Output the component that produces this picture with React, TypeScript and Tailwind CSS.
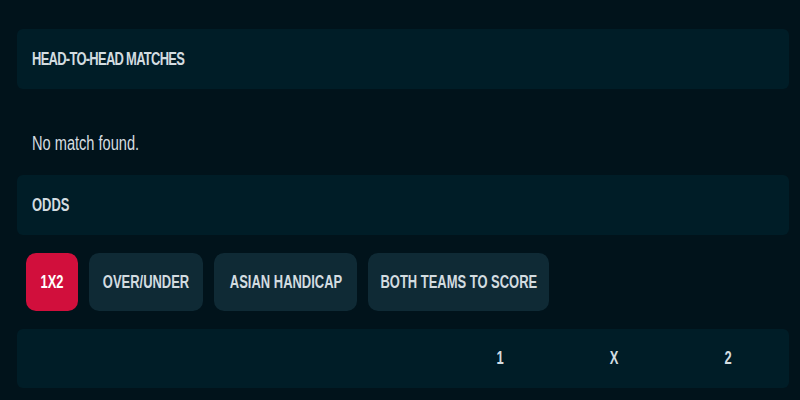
import React from "react";

// Match center block: head-to-head list (empty) + odds tabs and table header.
// The site font is a condensed sans; none is installed, so text is squeezed with scale-x.

const font = { fontFamily: '"Liberation Sans", Arial, sans-serif' };

const tabs = [
  { label: "1X2", w: "w-[52px]" },
  { label: "OVER/UNDER", w: "w-[114px]" },
  { label: "ASIAN HANDICAP", w: "w-[143px]" },
  { label: "BOTH TEAMS TO SCORE", w: "w-[181px]" },
];

function SectionHeader({ title, tight }: { title: string; tight?: boolean }) {
  return (
    <div className="flex h-[60px] items-center rounded-md bg-[#001d27] px-[15px]">
      <span
        className={`inline-block origin-left scale-x-[0.72] whitespace-nowrap text-[18px] font-bold text-[#d3dce0] ${
          tight ? "tracking-[-1px]" : ""
        }`}
      >
        {title}
      </span>
    </div>
  );
}

export default function App() {
  return (
    <div className="h-[400px] w-[800px] overflow-hidden bg-[#01131b] pl-[17px] pr-[11px] pt-[29px]" style={font}>
      <SectionHeader title="HEAD-TO-HEAD MATCHES" tight />

      <p className="mt-[42px] mb-[20px] px-[15px] text-[20px] leading-[24px] text-[#d5dde0]">
        <span className="inline-block origin-left scale-x-[0.73] whitespace-nowrap">No match found.</span>
      </p>

      <SectionHeader title="ODDS" />

      <div className="mt-[18px] flex gap-[11px] pl-[9px]">
        {tabs.map((t, i) => (
          <button
            key={t.label}
            type="button"
            className={`flex h-[58px] items-center justify-center rounded-[10px] ${t.w} ${
              i === 0 ? "bg-[#d10f3c] text-white" : "bg-[#0f2a35] text-[#d3dce0]"
            }`}
          >
            <span className="inline-block scale-x-[0.72] whitespace-nowrap text-[18px] font-bold">{t.label}</span>
          </button>
        ))}
      </div>

      <div className="mt-[18px] grid h-[59px] grid-cols-[1fr_114px_114px_114px] items-center rounded-md bg-[#001d27] pr-[4px] text-[18px] font-bold text-[#d3dce0]">
        <span />
        <span className="scale-x-[0.72] text-center">1</span>
        <span className="scale-x-[0.72] text-center">X</span>
        <span className="scale-x-[0.72] text-center">2</span>
      </div>
    </div>
  );
}
